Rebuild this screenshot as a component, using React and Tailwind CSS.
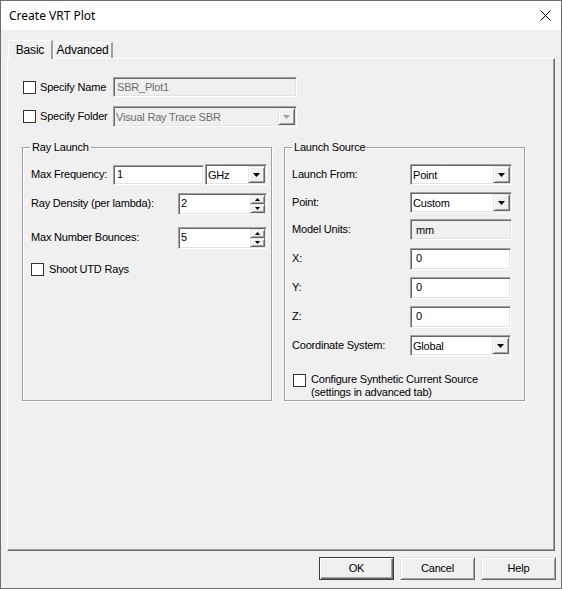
import React from 'react';

const sunken = 'border border-[#a0a0a0] border-r-white border-b-white shadow-[inset_1px_1px_0_#696969,inset_-1px_-1px_0_#e3e3e3]';
const raised = 'border border-[#e3e3e3] border-r-[#696969] border-b-[#696969] shadow-[inset_1px_1px_0_white,inset_-1px_-1px_0_#a0a0a0] bg-[#f0f0f0]';

const Check = () => (
    <span className="block w-[13px] h-[13px] shrink-0 border border-[#333] bg-white" />
);

const Arrow = ({ disabled }) => (
    <span className={`flex items-center justify-center w-[17px] h-full shrink-0 ${raised}`}>
        <svg width="7" height="4" viewBox="0 0 7 4">
            <path d="M0 0h7L3.5 4z" fill={disabled ? '#a0a0a0' : '#000'} />
        </svg>
    </span>
);

const Select = ({ value, className, disabled }) => (
    <div className={`flex items-stretch ${sunken} ${disabled ? 'bg-[#f0f0f0] text-[#6d6d6d]' : 'bg-white'} ${className}`}>
        <span className="flex-1 flex items-center pl-[2px] pt-[1px] truncate">{value}</span>
        <div className="py-[1px] pr-[1px]"><Arrow disabled={disabled} /></div>
    </div>
);

const Input = ({ value, className, muted }) => (
    <div className={`flex items-center pl-[3px] ${sunken} ${muted ? 'text-[#6d6d6d]' : ''} ${className}`}>
        {value}
    </div>
);

const SpinBtn = ({ up }) => (
    <span className={`flex-1 flex items-center justify-center ${raised}`}>
        <svg width="5" height="3" viewBox="0 0 5 3">
            <path d={up ? 'M0 3h5L2.5 0z' : 'M0 0h5L2.5 3z'} fill="#000" />
        </svg>
    </span>
);

const Spinner = ({ value }) => (
    <div className={`flex items-stretch bg-white w-[89px] h-[22px] ${sunken}`}>
        <span className="flex-1 flex items-center pl-[2px]">{value}</span>
        <div className="flex flex-col w-[16px] py-[1px] pr-[1px]">
            <SpinBtn up />
            <SpinBtn />
        </div>
    </div>
);

const Group = ({ title, className, children }) => (
    <div className={`relative border border-[#a0a0a0] shadow-[inset_1px_1px_0_white,1px_1px_0_white] ${className}`}>
        <span className="absolute -top-[8px] left-[7px] px-[2px] bg-[#f0f0f0] leading-[14px]">{title}</span>
        {children}
    </div>
);

const Row = ({ label, className, children }) => (
    <div className={`flex items-center h-[21px] ${className}`}>
        {label}
        {children}
    </div>
);

const Button = ({ label, primary }) => (
    <button className={`w-[75px] h-[23px] flex items-center justify-center ${primary ? 'border border-[#3c3c3c] shadow-[inset_1px_1px_0_white,inset_-1px_-1px_0_#696969,inset_-2px_-2px_0_#a0a0a0] bg-[#f0f0f0]' : raised}`}>
        {label}
    </button>
);

export default function App() {
    return (
        <div className="w-[562px] h-[589px] flex flex-col border border-[#6e6e6e] bg-[#f0f0f0] text-black text-[11px] leading-[13px] tracking-[-0.2px] overflow-hidden"
            style={{ fontFamily: '"Liberation Sans", Arial, sans-serif' }}>
            <div className="h-[29px] shrink-0 flex items-center justify-between bg-white pl-[8px] pr-[10px] tracking-normal">
                <span className="text-[12px]" style={{ fontFamily: '"Noto Sans", sans-serif' }}>Create VRT Plot</span>
                <svg width="11" height="11" viewBox="0 0 11 11">
                    <path d="M0.5 0.5l10 10M10.5 0.5l-10 10" stroke="#000" strokeWidth="1" />
                </svg>
            </div>

            <div className="flex items-end h-[18px] mt-[10px] ml-[7px] shrink-0">
                <div className="h-[19px] w-[45px] -mb-[1px] z-10 flex items-center justify-center bg-[#f0f0f0] border-t border-l border-white border-r-2 border-r-[#a0a0a0] text-[12px]">
                    Basic
                </div>
                <div className="h-[16px] w-[60px] flex items-center justify-center border-t border-l border-white border-r-2 border-r-[#a0a0a0] text-[12px]">
                    Advanced
                </div>
            </div>

            <div className="w-[548px] h-[493px] ml-[6px] shrink-0 border-t border-l border-white border-r border-b border-r-[#696969] border-b-[#696969] shadow-[inset_-1px_-1px_0_#a0a0a0]">
                <div className="flex items-center h-[20px] mt-[18px] ml-[15px]">
                    <div className="flex items-center gap-[4px] w-[90px]">
                        <Check />
                        <span>Specify Name</span>
                    </div>
                    <Input value="SBR_Plot1" muted className="w-[184px] h-[20px] bg-[#f0f0f0]" />
                </div>
                <div className="flex items-center h-[21px] mt-[9px] ml-[15px]">
                    <div className="flex items-center gap-[4px] w-[90px]">
                        <Check />
                        <span>Specify Folder</span>
                    </div>
                    <Select value="Visual Ray Trace SBR" disabled className="w-[184px] h-[21px]" />
                </div>

                <div className="flex mt-[20px] ml-[14px] gap-[12px]">
                    <Group title="Ray Launch" className="w-[250px] h-[254px] pl-[8px]">
                        <Row className="mt-[16px]" label={<span className="w-[82px]">Max Frequency:</span>}>
                            <Input value="1" className="w-[91px] h-[20px] bg-white" />
                            <Select value="GHz" className="w-[62px] h-[21px] ml-[1px]" />
                        </Row>
                        <Row className="mt-[8px]" label={<span className="w-[147px]">Ray Density (per lambda):</span>}>
                            <Spinner value="2" />
                        </Row>
                        <Row className="mt-[13px]" label={<span className="w-[147px]">Max Number Bounces:</span>}>
                            <Spinner value="5" />
                        </Row>
                        <div className="flex items-center gap-[5px] mt-[15px]">
                            <Check />
                            <span>Shoot UTD Rays</span>
                        </div>
                    </Group>

                    <Group title="Launch Source" className="w-[241px] h-[254px] pl-[7px]">
                        <Row className="mt-[16px]" label={<span className="w-[118px]">Launch From:</span>}>
                            <Select value="Point" className="w-[102px] h-[21px]" />
                        </Row>
                        <Row className="mt-[7px]" label={<span className="w-[118px]">Point:</span>}>
                            <Select value="Custom" className="w-[102px] h-[21px]" />
                        </Row>
                        <Row className="mt-[6px]" label={<span className="w-[118px]">Model Units:</span>}>
                            <Input value="mm" className="w-[102px] h-[21px] bg-[#f0f0f0] items-start pt-[4px] pl-[5px]" />
                        </Row>
                        <Row className="mt-[8px]" label={<span className="w-[118px]">X:</span>}>
                            <Input value="0" className="w-[101px] h-[22px] bg-white pl-[5px]" />
                        </Row>
                        <Row className="mt-[8px]" label={<span className="w-[118px]">Y:</span>}>
                            <Input value="0" className="w-[101px] h-[22px] bg-white pl-[5px]" />
                        </Row>
                        <Row className="mt-[8px]" label={<span className="w-[118px]">Z:</span>}>
                            <Input value="0" className="w-[101px] h-[22px] bg-white pl-[5px]" />
                        </Row>
                        <Row className="mt-[8px]" label={<span className="w-[118px]">Coordinate System:</span>}>
                            <Select value="Global" className="w-[101px] h-[21px]" />
                        </Row>
                        <div className="flex items-start gap-[5px] mt-[17px] ml-[1px]">
                            <span className="mt-[1px]"><Check /></span>
                            <span>Configure Synthetic Current Source<br />(settings in advanced tab)</span>
                        </div>
                    </Group>
                </div>
            </div>

            <div className="flex justify-end gap-[6px] mt-[6px] pr-[5px]">
                <Button label="OK" primary />
                <Button label="Cancel" />
                <Button label="Help" />
            </div>
        </div>
    );
}
